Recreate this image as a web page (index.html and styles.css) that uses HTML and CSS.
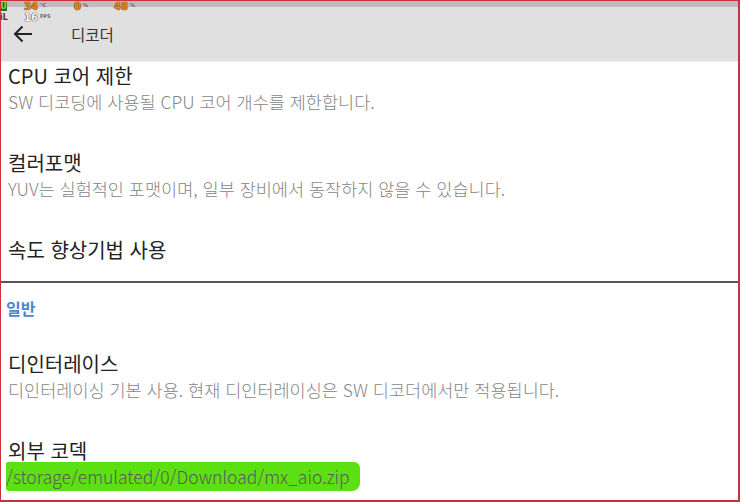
FILE: index.html
```html
<!DOCTYPE html>
<html lang="ko">
<head>
    <meta charset="UTF-8">
    <meta name="viewport" content="width=device-width, initial-scale=1.0">
    <title>디코더</title>
    <link rel="stylesheet" href="styles.css">
</head>
<body>

    <div class="screen">
        <div class="status-bar"></div>

        <!-- overlay monitor in the corner -->
        <div class="monitor">
            <div class="monitor-row">
                <span class="chip green">U</span>
                <span class="val">34</span><span class="unit">°C</span>
                <span class="val gap">0</span><span class="unit">%</span>
                <span class="val gap2">48</span><span class="unit">%</span>
            </div>
            <div class="monitor-row">
                <span class="chip red">iL</span>
                <span class="val white">16</span><span class="unit">FPS</span>
            </div>
        </div>

        <div class="toolbar">
            <svg class="back" width="20" height="18" viewBox="0 0 20 18">
                <path d="M19 9H2M9.5 1.5L2 9l7.5 7.5" fill="none" stroke="#222" stroke-width="2"/>
            </svg>
            <span class="toolbar-title">디코더</span>
        </div>

        <div class="list">
            <div class="item first">
                <div class="item-title">CPU 코어 제한</div>
                <div class="item-sub">SW 디코딩에 사용될 CPU 코어 개수를 제한합니다.</div>
            </div>
            <div class="item">
                <div class="item-title">컬러포맷</div>
                <div class="item-sub">YUV는 실험적인 포맷이며, 일부 장비에서 동작하지 않을 수 있습니다.</div>
            </div>
            <div class="item">
                <div class="item-title">속도 향상기법 사용</div>
            </div>

            <div class="category">일반</div>

            <div class="item">
                <div class="item-title">디인터레이스</div>
                <div class="item-sub">디인터레이싱 기본 사용. 현재 디인터레이싱은 SW 디코더에서만 적용됩니다.</div>
            </div>
            <div class="item">
                <div class="item-title">외부 코덱</div>
                <div class="item-sub"><span class="marker">/storage/emulated/0/Download/mx_aio.zip</span></div>
            </div>
        </div>
    </div>

</body>
</html>
```

FILE: styles.css
```css
body {
    margin: 0;
    padding: 0;
    font-family: "Noto Sans CJK KR", "Noto Sans", sans-serif;
    background: #fff;
}

.screen {
    position: relative;
    width: 740px;
    height: 502px;
    box-sizing: border-box;
    border: 1px solid #c8333a;
    border-right-width: 2px;
    border-bottom-width: 2px;
    overflow: hidden;
}

.status-bar {
    height: 6px;
    background: #bdbdbd;
}

.toolbar {
    height: 54px;
    background: #e0e0e0;
    display: flex;
    align-items: center;
    box-shadow: 0 1px 2px rgba(0, 0, 0, 0.08);
}

.back {
    margin-left: 12px;
    margin-right: 38px;
}

.toolbar-title {
    font-size: 15.5px;
    color: #333;
}

.monitor {
    position: absolute;
    top: 1px;
    left: -1px;
    font-family: "DejaVu Sans", sans-serif;
    font-weight: bold;
}

.monitor-row {
    display: flex;
    align-items: flex-start;
    height: 11px;
    font-size: 10px;
    line-height: 9px;
}

.chip {
    width: 7px;
    font-size: 8px;
    text-align: center;
    margin-right: 17px;
}

.chip.green {
    background: #2e6b2e;
    color: #9c3;
}

.chip.red {
    color: #8a1a1a;
}

.val {
    color: #e58a10;
    text-shadow: 0 0 1px #6a3000, 0 0 1px #6a3000;
}

.val.white {
    color: #fff;
    text-shadow: 0 0 1px #222, 0 0 1px #222;
}

.val.gap {
    margin-left: 28px;
}

.val.gap2 {
    margin-left: 26px;
}

.unit {
    font-size: 5px;
    line-height: 6px;
    color: #666;
    margin-left: 2px;
}

.list {
    padding-left: 7px;
}

.item {
    padding: 17px 0 18px;
}

.item.first {
    padding-top: 2px;
}

.item-title {
    font-size: 20px;
    line-height: 26px;
    color: #222;
}

.item-sub {
    font-size: 17.5px;
    font-weight: 300;
    line-height: 26px;
    color: #858585;
}

.category {
    margin-left: -7px;
    padding: 12px 0 13px 5px;
    border-top: 2px solid #555;
    font-size: 16px;
    line-height: 26px;
    font-weight: bold;
    color: #4a86d4;
}

.marker {
    background: #5de012;
    color: #5a5a5a;
    padding: 2px 10px 2px 0;
    margin-left: -2px;
    border-radius: 2px 6px 8px 3px;
}
```
